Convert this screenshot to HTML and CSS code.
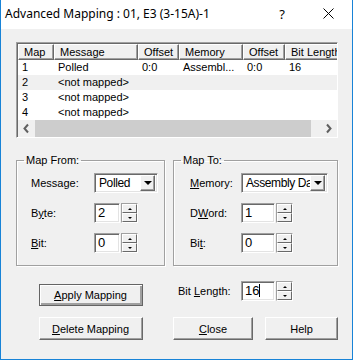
FILE: index.html
```html
<!DOCTYPE html>
<html lang="en">
<head>
    <meta charset="UTF-8">
    <title>Advanced Mapping</title>
    <link rel="stylesheet" href="styles.css">
</head>
<body>
    <div class="window">
        <div class="titlebar">
            <span class="title">Advanced Mapping : 01, E3 (3-15A)-1</span>
            <span class="help-btn">?</span>
            <span class="close-btn">
                <svg width="11" height="11" viewBox="0 0 11 11"><path d="M0.5 0.5 L10.5 10.5 M10.5 0.5 L0.5 10.5" stroke="#000" stroke-width="1" fill="none"/></svg>
            </span>
        </div>

        <div class="content">
            <div class="listview">
                <div class="lv-row lv-head">
                    <div class="hcell">Map</div>
                    <div class="hcell">Message</div>
                    <div class="hcell">Offset</div>
                    <div class="hcell">Memory</div>
                    <div class="hcell">Offset</div>
                    <div class="hcell">Bit Length</div>
                </div>
                <div class="lv-body">
                    <div class="lv-row">
                        <div class="cell">1</div>
                        <div class="cell">Polled</div>
                        <div class="cell">0:0</div>
                        <div class="cell">Assembl...</div>
                        <div class="cell">0:0</div>
                        <div class="cell">16</div>
                    </div>
                    <div class="lv-row selected">
                        <div class="cell">2</div>
                        <div class="cell">&lt;not mapped&gt;</div>
                        <div class="cell"></div><div class="cell"></div><div class="cell"></div><div class="cell"></div>
                    </div>
                    <div class="lv-row">
                        <div class="cell">3</div>
                        <div class="cell">&lt;not mapped&gt;</div>
                        <div class="cell"></div><div class="cell"></div><div class="cell"></div><div class="cell"></div>
                    </div>
                    <div class="lv-row">
                        <div class="cell">4</div>
                        <div class="cell">&lt;not mapped&gt;</div>
                        <div class="cell"></div><div class="cell"></div><div class="cell"></div><div class="cell"></div>
                    </div>
                </div>
                <div class="hscroll">
                    <div class="sb-btn">
                        <svg width="17" height="17" viewBox="0 0 17 17"><polyline points="10,4.5 6.5,8.5 10,12.5" stroke="#606060" stroke-width="2" fill="none"/></svg>
                    </div>
                    <div class="sb-track"><div class="sb-thumb"></div></div>
                    <div class="sb-btn">
                        <svg width="17" height="17" viewBox="0 0 17 17"><polyline points="7,4.5 10.5,8.5 7,12.5" stroke="#606060" stroke-width="2" fill="none"/></svg>
                    </div>
                </div>
            </div>

            <div class="groups">
                <fieldset class="group group-from">
                    <legend>Map From:</legend>
                    <div class="group-body">
                        <div class="field">
                            <span class="lbl">Message:</span>
                            <div class="combo combo-msg">
                                <span class="combo-text">Polled</span>
                                <span class="combo-btn"><i class="tri-down"></i></span>
                            </div>
                        </div>
                        <div class="field">
                            <span class="lbl">B<u>y</u>te:</span>
                            <div class="spin">
                                <div class="edit edit-sm">2</div>
                                <div class="updown"><span class="ud-btn"><i class="tri-up"></i></span><span class="ud-btn"><i class="tri-dn"></i></span></div>
                            </div>
                        </div>
                        <div class="field">
                            <span class="lbl"><u>B</u>it:</span>
                            <div class="spin">
                                <div class="edit edit-sm">0</div>
                                <div class="updown"><span class="ud-btn"><i class="tri-up"></i></span><span class="ud-btn"><i class="tri-dn"></i></span></div>
                            </div>
                        </div>
                    </div>
                </fieldset>

                <fieldset class="group group-to">
                    <legend>Map To:</legend>
                    <div class="group-body">
                        <div class="field">
                            <span class="lbl"><u>M</u>emory:</span>
                            <div class="combo combo-mem">
                                <span class="combo-text">Assembly Data</span>
                                <span class="combo-btn"><i class="tri-down"></i></span>
                            </div>
                        </div>
                        <div class="field">
                            <span class="lbl">D<u>W</u>ord:</span>
                            <div class="spin">
                                <div class="edit">1</div>
                                <div class="updown"><span class="ud-btn"><i class="tri-up"></i></span><span class="ud-btn"><i class="tri-dn"></i></span></div>
                            </div>
                        </div>
                        <div class="field">
                            <span class="lbl">Bi<u>t</u>:</span>
                            <div class="spin">
                                <div class="edit">0</div>
                                <div class="updown"><span class="ud-btn"><i class="tri-up"></i></span><span class="ud-btn"><i class="tri-dn"></i></span></div>
                            </div>
                        </div>
                    </div>
                </fieldset>
            </div>

            <div class="actions">
                <div class="cell-left">
                    <button class="btn btn-default btn-wide"><u>A</u>pply Mapping</button>
                </div>
                <div class="field bitlen">
                    <span class="lbl">Bit <u>L</u>ength:</span>
                    <div class="spin">
                        <div class="edit">16<span class="caret"></span></div>
                        <div class="updown"><span class="ud-btn"><i class="tri-up"></i></span><span class="ud-btn"><i class="tri-dn"></i></span></div>
                    </div>
                </div>
                <div class="cell-left">
                    <button class="btn btn-wide"><u>D</u>elete Mapping</button>
                </div>
                <div class="btn-pair">
                    <button class="btn btn-close"><u>C</u>lose</button>
                    <button class="btn btn-help">Help</button>
                </div>
            </div>
        </div>
    </div>
</body>
</html>
```

FILE: styles.css
```css
* {
    box-sizing: border-box;
}
body {
    margin: 0;
    font-family: 'Liberation Sans', Arial, sans-serif;
    font-size: 11px;
    color: #000;
}
.window {
    width: 353px;
    height: 360px;
    border: 1px solid #1883d7;
    border-top: none;
    background: #f0f0f0;
}
.titlebar {
    height: 29px;
    background: #fff;
    display: flex;
    align-items: center;
    padding: 0 0 2px 4px;
}
.title {
    font-family: 'Noto Sans', sans-serif;
    font-size: 12px;
    flex: 1;
}
.help-btn {
    font-family: 'Noto Sans', sans-serif;
    font-size: 13px;
    width: 46px;
    text-align: center;
}
.close-btn {
    width: 46px;
    display: flex;
    justify-content: center;
    margin-right: 1px;
}
.content {
    padding: 13px 13px 0 15px;
}

/* list view */
.listview {
    width: 322px;
    border: 1px solid;
    border-color: #a0a0a0 #fff #fff #a0a0a0;
    background: #fff;
    overflow: hidden;
}
.lv-head, .lv-body, .hscroll {
    border-left: 1px solid #696969;
}
.lv-head {
    border-top: 1px solid #696969;
}
.lv-row {
    display: grid;
    grid-template-columns: 36px 84px 41px 64px 42px 80px;
    height: 15px;
    line-height: 15px;
    white-space: nowrap;
}
.lv-row.selected {
    background: #f0f0f0;
}
.lv-head {
    height: 17px;
    line-height: 15px;
    background: #f0f0f0;
}
.hcell {
    border: 1px solid;
    border-color: #fff #696969 #696969 #fff;
    box-shadow: inset -1px -1px #a0a0a0;
    padding-left: 5px;
    overflow: hidden;
}
.cell {
    padding-left: 4px;
    overflow: hidden;
}
.lv-body {
    height: 60px;
}
.hscroll {
    display: flex;
    height: 17px;
    background: #f0f0f0;
}
.sb-btn {
    width: 17px;
    height: 17px;
}
.sb-track {
    flex: 1;
    padding-right: 9px;
}
.sb-thumb {
    height: 17px;
    background: #cdcdcd;
}

/* group boxes */
.groups {
    display: flex;
    gap: 8px;
    margin-top: 16px;
}
fieldset.group {
    margin: 0;
    padding: 0;
    border: 1px solid #a0a0a0;
    box-shadow: inset 1px 1px #fff, 1px 1px #fff;
    height: 112px;
}
.group legend {
    padding: 0 2px;
    margin-left: 7px;
    line-height: 13px;
}
.group-body {
    display: flex;
    flex-direction: column;
    gap: 10px;
    padding: 6px 0 10px 14px;
}
.group-from {
    width: 149px;
}
.group-to {
    width: 165px;
}
.group-to .group-body {
    padding-left: 16px;
}
.field {
    display: flex;
    align-items: center;
    height: 20px;
}
.group-from .lbl {
    width: 63px;
}
.group-to .lbl {
    width: 51px;
}

/* controls */
.combo, .edit {
    height: 20px;
    background: #fff;
    border: 1px solid;
    border-color: #a0a0a0 #fff #fff #a0a0a0;
    box-shadow: inset 1px 1px #696969, inset -1px -1px #e3e3e3;
}
.combo {
    display: flex;
    align-items: center;
    padding: 1px 2px 1px 2px;
    font-size: 12px;
    letter-spacing: -0.4px;
}
.combo-msg {
    width: 64px;
}
.combo-mem {
    width: 87px;
}
.combo-text {
    flex: 1;
    overflow: hidden;
    white-space: nowrap;
    padding-left: 2px;
}
.combo-btn {
    width: 15px;
    height: 16px;
    flex: none;
    border: 1px solid;
    border-color: #fff #696969 #696969 #fff;
    box-shadow: inset -1px -1px #a0a0a0;
    background: #f0f0f0;
    display: flex;
    align-items: center;
    justify-content: center;
}
.tri-down {
    width: 0;
    height: 0;
    border-left: 4px solid transparent;
    border-right: 4px solid transparent;
    border-top: 4px solid #000;
}
.spin {
    display: flex;
}
.edit {
    width: 34px;
    padding: 0 0 0 3px;
    font-size: 13px;
    line-height: 17px;
}
.edit-sm {
    width: 26px;
}
.caret {
    display: inline-block;
    width: 1px;
    height: 13px;
    background: #000;
    vertical-align: -2px;
}
.updown {
    width: 17px;
    height: 20px;
    margin-left: 1px;
    display: flex;
    flex-direction: column;
    border: 1px solid;
    border-color: #a0a0a0 #fff #fff #a0a0a0;
}
.ud-btn {
    flex: 1;
    background: #f0f0f0;
    border: 1px solid;
    border-color: #fff #696969 #696969 #fff;
    display: flex;
    align-items: center;
    justify-content: center;
}
.tri-up, .tri-dn {
    width: 0;
    height: 0;
    border-left: 2px solid transparent;
    border-right: 2px solid transparent;
}
.tri-up {
    border-bottom: 2px solid #000;
}
.tri-dn {
    border-top: 2px solid #000;
}

/* bottom actions */
.actions {
    display: grid;
    grid-template-columns: 149px 165px;
    grid-template-rows: 25px 23px;
    column-gap: 8px;
    row-gap: 11px;
    margin-top: 15px;
}
.cell-left {
    display: flex;
    justify-content: center;
    align-items: flex-end;
}
.bitlen {
    padding-left: 5px;
}
.bitlen .lbl {
    width: 63px;
}
.btn {
    font-family: 'Liberation Sans', Arial, sans-serif;
    font-size: 11px;
    height: 23px;
    padding: 0;
    margin: 0;
    background: #f0f0f0;
    border: 1px solid;
    border-color: #fff #696969 #696969 #fff;
    box-shadow: inset -1px -1px #a0a0a0;
    color: #000;
}
.btn-wide {
    width: 104px;
}
.btn-default {
    height: 22px;
    border: 1px solid #646464;
    box-shadow: inset 1px 1px #fff, inset -2px -2px #a0a0a0, inset -1px -1px #696969;
}
.btn-pair {
    display: flex;
    justify-content: space-between;
}
.btn-close {
    width: 80px;
}
.btn-help {
    width: 73px;
}
```
